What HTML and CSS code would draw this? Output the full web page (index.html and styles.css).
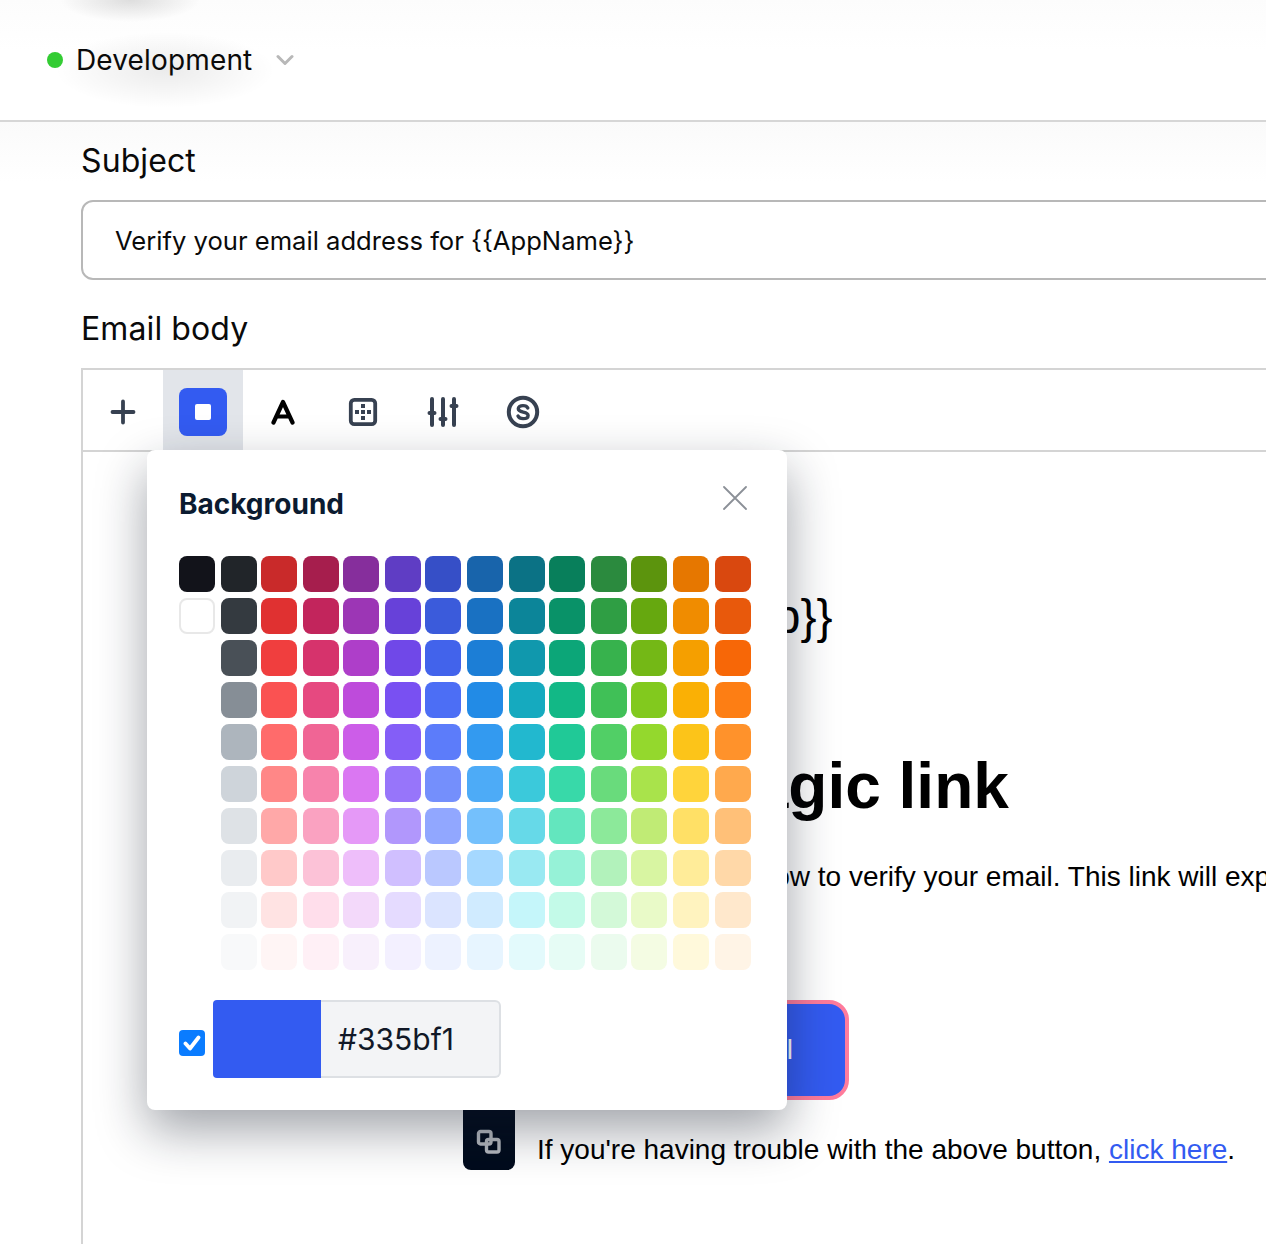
FILE: index.html
```html
<!DOCTYPE html>
<html>
<head>
<meta charset="utf-8">
<title>Email template</title>
<link rel="stylesheet" href="styles.css">
<script src="palette.js"></script>
</head>
<body>
<!-- top bar -->
<div class="env-bar">
  <span class="env-dot"></span>
  <span class="env-name">Development</span>
  <svg class="env-chevron" width="18" height="12" viewBox="0 0 18 12"><path d="M2 2.500l7 7 7-7" fill="none" stroke="#b8b8b8" stroke-width="3" stroke-linecap="round" stroke-linejoin="round"/></svg>
</div>

<div class="form">
  <label class="field-label">Subject</label>
  <div class="subject-input">Verify your email address for {{AppName}}</div>
  <label class="field-label body-label">Email body</label>

  <div class="editor">
    <!-- toolbar -->
    <div class="toolbar">
      <div class="tool">
        <svg width="26" height="26" viewBox="0 0 26 26"><path d="M13 2.500v21M2.500 13h21" fill="none" stroke="#374151" stroke-width="3.800" stroke-linecap="round"/></svg>
      </div>
      <div class="tool tool-active">
        <span class="bg-btn"><span class="bg-btn-inner"></span></span>
      </div>
      <div class="tool">
        <svg width="24" height="26" viewBox="0 0 24 26"><path d="M2.500 23.500L12 3l9.500 20.500M6.500 17.500h11" fill="none" stroke="#000" stroke-width="4.200" stroke-linecap="round" stroke-linejoin="round"/></svg>
      </div>
      <div class="tool">
        <svg width="30" height="30" viewBox="0 0 30 30"><rect x="2.800" y="2.800" width="24.400" height="24.400" rx="3.500" fill="none" stroke="#374151" stroke-width="3.800"/><path d="M13 7h4v4h-4zM13 13h4v4h-4zM13 19h4v4h-4zM7 13h4v4H7zM19 13h4v4h-4z" fill="#374151"/></svg>
      </div>
      <div class="tool">
        <svg width="32" height="32" viewBox="0 0 32 32"><path d="M5 3v26M16 3v26M27 3v26" fill="none" stroke="#374151" stroke-width="4" stroke-linecap="round"/><path d="M2.500 17h5M13.500 23h5M24.500 10h5" fill="none" stroke="#374151" stroke-width="4" stroke-linecap="round"/></svg>
      </div>
      <div class="tool">
        <svg width="34" height="34" viewBox="0 0 34 34"><circle cx="17" cy="17" r="14.200" fill="none" stroke="#374151" stroke-width="4"/><path d="M21.800 13c-.7-1.600-2.500-2.400-4.800-2.400-2.700 0-4.700 1.200-4.700 3.200 0 4.400 9.800 2.200 9.800 6.600 0 2.100-2.200 3.200-5 3.200-2.400 0-4.300-.9-5.100-2.600" fill="none" stroke="#374151" stroke-width="3.400" stroke-linecap="round"/></svg>
      </div>
    </div>

    <!-- email preview, most of it sits under the popover -->
    <div class="canvas">
      <div class="mail-app">{{App}}</div>
      <h1 class="mail-title">Your magic link</h1>
      <p class="mail-text">Click on the link below to verify your email. This link will expire in 24 hours.</p>
      <a class="mail-button">Verify your email</a>
      <p class="mail-note">If you're having trouble with the above button, <a class="mail-link">click here</a>.</p>

      <div class="block-handle">
        <svg width="26" height="26" viewBox="0 0 26 26"><rect x="2.500" y="2.500" width="12.500" height="12.500" rx="2" fill="none" stroke="#b4b8be" stroke-width="3.400"/><rect x="10.500" y="10.500" width="12.500" height="12.500" rx="2" fill="none" stroke="#b4b8be" stroke-width="3.400"/></svg>
      </div>
    </div>
  </div>
</div>

<!-- background popover -->
<div class="popover">
  <div class="popover-head">
    <span class="popover-title">Background</span>
    <svg class="popover-close" width="26" height="26" viewBox="0 0 26 26"><path d="M2 2l22 22M24 2L2 24" fill="none" stroke="#8b9097" stroke-width="1.800" stroke-linecap="round"/></svg>
  </div>
  <div class="swatches" id="swatches"></div>
  <div class="color-row">
    <span class="check">
      <svg width="18" height="16" viewBox="0 0 18 16"><path d="M2.500 8.500l4.500 5 8.500-11" fill="none" stroke="#fff" stroke-width="3.800" stroke-linecap="round" stroke-linejoin="round"/></svg>
    </span>
    <span class="color-preview"></span>
    <span class="color-value">#335bf1</span>
  </div>
</div>
</body>
</html>
```

FILE: styles.css
```css
* {
    margin: 0;
    padding: 0;
    box-sizing: border-box;
}
body {
    width: 1266px;
    height: 1244px;
    overflow: hidden;
    position: relative;
    background: #fff;
    font-family: Inter, "Liberation Sans", sans-serif;
    color: #0a0a0a;
}

/* top bar */
.env-bar {
    height: 122px;
    padding-left: 47px;
    display: flex;
    align-items: center;
    border-bottom: 2px solid #d6d6d6;
    background:
        radial-gradient(ellipse 70px 22px at 130px 0, rgba(0, 0, 0, .12), transparent),
        radial-gradient(ellipse 110px 38px at 165px 70px, rgba(0, 0, 0, .08), transparent),
        linear-gradient(#fcfcfc, #fff 50px);
}
.env-dot {
    width: 16px;
    height: 16px;
    border-radius: 50%;
    background: #33cc33;
    margin-right: 13px;
}
.env-name {
    font-size: 28px;
    letter-spacing: .15px;
}
.env-chevron {
    margin-left: 24px;
}

/* form */
.form {
    padding: 20px 0 0 81px;
    background: linear-gradient(#fafafa, #fff 60px);
    height: 1122px;
}
.field-label {
    display: block;
    font-size: 32px;
    line-height: 38px;
    letter-spacing: .1px;
}
.subject-input {
    width: 1300px;
    height: 80px;
    margin-top: 20px;
    padding-left: 32px;
    display: flex;
    align-items: center;
    border: 2px solid #b8b8b8;
    border-radius: 12px;
    background: #fff;
    font-size: 25.600px;
}
.body-label {
    margin-top: 30px;
}

/* editor */
.editor {
    width: 1300px;
    height: 900px;
    margin-top: 20px;
    border: 2px solid #d4d4d4;
    border-width: 2px 0 0 2px;
    background: #fff;
}
.toolbar {
    height: 82px;
    display: flex;
    border-bottom: 2px solid #d4d4d4;
}
.tool {
    width: 80px;
    height: 80px;
    padding-top: 4px;
    display: flex;
    align-items: center;
    justify-content: center;
}
.tool-active {
    background: #e2e5ea;
}
.bg-btn {
    width: 48px;
    height: 48px;
    border-radius: 8px;
    background: #335bf1;
    display: flex;
    align-items: center;
    justify-content: center;
}
.bg-btn-inner {
    width: 16px;
    height: 16px;
    border-radius: 2px;
    background: #fff;
}

/* email preview */
.canvas {
    position: relative;
    padding: 135px 0 0 454px;
    font-family: "Liberation Sans", Arial, sans-serif;
    color: #000;
}
.mail-app {
    padding-left: 146px;
    font-size: 48px;
    line-height: 60px;
}
.mail-title {
    margin-top: 102px;
    font-size: 64px;
    line-height: 74px;
}
.mail-text {
    margin-top: 36px;
    margin-left: -4px;
    font-size: 28px;
    line-height: 36px;
    white-space: nowrap;
}
.mail-button {
    display: block;
    width: 312px;
    height: 100px;
    margin-top: 105px;
    padding-right: 52px;
    border: 4px solid #ff7c9c;
    border-radius: 20px;
    background: #335bf1;
    color: #fff;
    font-size: 28px;
    line-height: 92px;
    text-align: right;
}
.mail-note {
    margin-top: 32px;
    font-size: 28px;
    line-height: 36px;
    white-space: nowrap;
}
.mail-link {
    color: #335bf1;
    text-decoration: underline;
}
.block-handle {
    position: absolute;
    left: 380px;
    top: 640px;
    width: 52px;
    height: 78px;
    padding-top: 37px;
    border-radius: 8px;
    background: #000b1c;
    display: flex;
    justify-content: center;
}

/* popover */
.popover {
    position: absolute;
    left: 147px;
    top: 450px;
    width: 640px;
    height: 660px;
    padding: 32px;
    border-radius: 8px;
    background: #fff;
    box-shadow: 0 20px 50px rgba(17, 24, 39, .4);
}
.popover-head {
    height: 74px;
    display: flex;
    justify-content: space-between;
}
.popover-title {
    font-size: 28px;
    font-weight: 700;
    line-height: 44px;
    color: #0b1b30;
}
.popover-close {
    margin: 3px 7px 0 0;
}
/* tracks follow the snapped columns of the reference: 40 and 42 steps */
.swatches {
    display: grid;
    grid-template-columns: 42px 40px 42px 40px 42px 40px 42px 42px 40px 42px 40px 42px 42px 36px;
    grid-template-rows: repeat(10, 36px);
    grid-auto-flow: column;
    row-gap: 6px;
}
.swatch {
    width: 36px;
    border-radius: 8px;
}
.swatch-white {
    background: #fff;
    border: 2px solid #e8e8e8;
}
.color-row {
    margin-top: 30px;
    display: flex;
    align-items: center;
}
.check {
    width: 26px;
    height: 26px;
    margin-top: 8px;
    border-radius: 4px;
    background: #0a7cff;
    display: flex;
    align-items: center;
    justify-content: center;
}
.color-preview {
    width: 108px;
    height: 78px;
    margin-left: 8px;
    border-radius: 4px 0 0 4px;
    background: #335bf1;
}
.color-value {
    width: 180px;
    height: 78px;
    padding-left: 17px;
    display: flex;
    align-items: center;
    border: 2px solid #dde0e4;
    border-left: 0;
    border-radius: 0 6px 6px 0;
    background: #f3f4f6;
    font-size: 30px;
    color: #111827;
}
```

FILE: palette.js
```js
// open color shades, darkest first, one list per column
var columns = [
    ["#12131a", "#ffffff"],
    ["#212529", "#343a40", "#495057", "#868e96", "#adb5bd", "#ced4da", "#dee2e6", "#e9ecef", "#f1f3f5", "#f8f9fa"],
    ["#c92a2a", "#e03131", "#f03e3e", "#fa5252", "#ff6b6b", "#ff8787", "#ffa8a8", "#ffc9c9", "#ffe3e3", "#fff5f5"],
    ["#a61e4d", "#c2255c", "#d6336c", "#e64980", "#f06595", "#f783ac", "#faa2c1", "#fcc2d7", "#ffdeeb", "#fff0f6"],
    ["#862e9c", "#9c36b5", "#ae3ec9", "#be4bdb", "#cc5de8", "#da77f2", "#e599f7", "#eebefa", "#f3d9fa", "#f8f0fc"],
    ["#5f3dc4", "#6741d9", "#7048e8", "#7950f2", "#845ef7", "#9775fa", "#b197fc", "#d0bfff", "#e5dbff", "#f3f0ff"],
    ["#364fc7", "#3b5bdb", "#4263eb", "#4c6ef5", "#5c7cfa", "#748ffc", "#91a7ff", "#bac8ff", "#dbe4ff", "#edf2ff"],
    ["#1864ab", "#1971c2", "#1c7ed6", "#228be6", "#339af0", "#4dabf7", "#74c0fc", "#a5d8ff", "#d0ebff", "#e7f5ff"],
    ["#0b7285", "#0c8599", "#1098ad", "#15aabf", "#22b8cf", "#3bc9db", "#66d9e8", "#99e9f2", "#c5f6fa", "#e3fafc"],
    ["#087f5b", "#099268", "#0ca678", "#12b886", "#20c997", "#38d9a9", "#63e6be", "#96f2d7", "#c3fae8", "#e6fcf5"],
    ["#2b8a3e", "#2f9e44", "#37b24d", "#40c057", "#51cf66", "#69db7c", "#8ce99a", "#b2f2bb", "#d3f9d8", "#ebfbee"],
    ["#5c940d", "#66a80f", "#74b816", "#82c91e", "#94d82d", "#a9e34b", "#c0eb75", "#d8f5a2", "#e9fac8", "#f4fce3"],
    ["#e67700", "#f08c00", "#f59f00", "#fab005", "#fcc419", "#ffd43b", "#ffe066", "#ffec99", "#fff3bf", "#fff9db"],
    ["#d9480f", "#e8590c", "#f76707", "#fd7e14", "#ff922b", "#ffa94d", "#ffc078", "#ffd8a8", "#ffe8cc", "#fff4e6"]
];

window.onload = function () {
    var box = document.getElementById("swatches");
    for (var c = 0; c < columns.length; c++) {
        for (var r = 0; r < 10; r++) {
            var item = document.createElement("span");
            var color = columns[c][r];
            if (color === "#ffffff") {
                item.className = "swatch swatch-white";
            } else if (color) {
                item.className = "swatch";
                item.style.background = color;
            }
            box.appendChild(item);
        }
    }
};
```
